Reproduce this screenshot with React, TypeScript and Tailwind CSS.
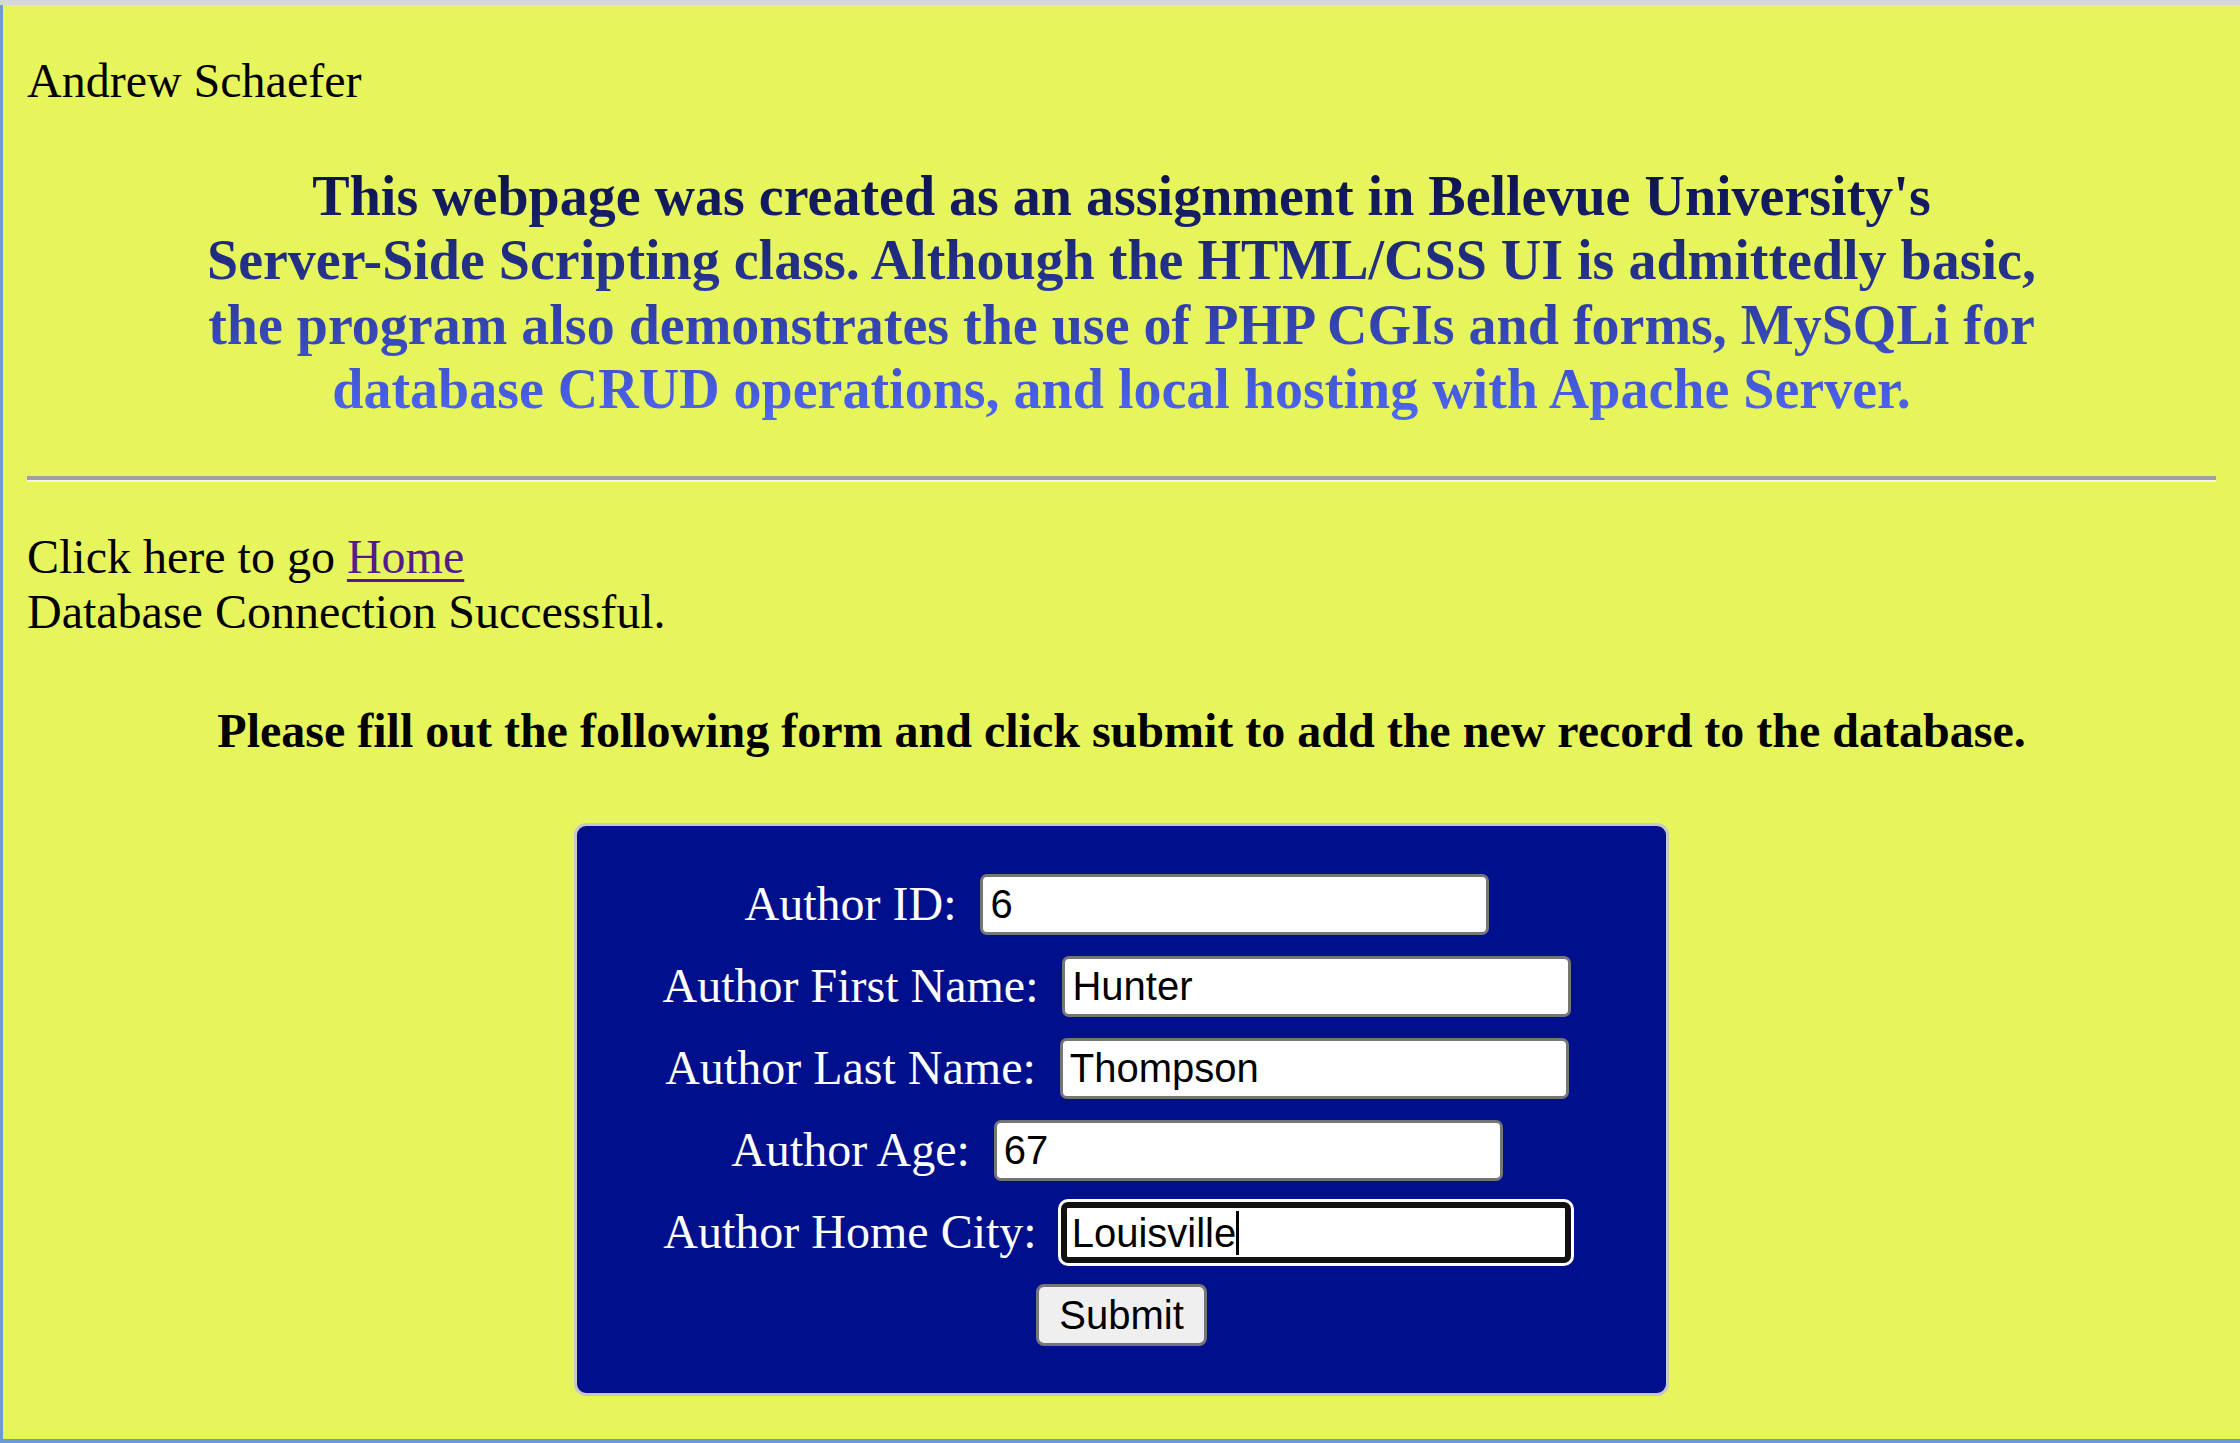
import React from "react";

const serif = { fontFamily: '"Liberation Serif", "Times New Roman", serif' };

function Field({ label, value }: { label: string; value: string }) {
  return (
    <div className="flex h-[61px] items-center justify-center gap-[24px] pr-[9px]">
      <span className="-mt-[2px] text-[48px] leading-none text-white" style={serif}>
        {label}
      </span>
      <input
        readOnly
        defaultValue={value}
        className="h-[61px] w-[509px] rounded-[7px] border-[3px] border-[#767676] bg-white px-[7px] text-[40px] text-black outline-none font-['Liberation_Sans',Arial,sans-serif]"
      />
    </div>
  );
}

export default function App() {
  return (
    <div className="flex h-[1443px] w-full flex-col overflow-hidden bg-[#e7f55c]">
      <div className="h-[5px] w-full shrink-0 bg-[#d5d7dc]" />
      <div
        className="flex flex-1 flex-col border-b-[4px] border-l-[3px] border-[#6a9bd8] pl-[24px] pr-[24px] pt-[48px] text-black"
        style={serif}
      >
        <p className="text-[48px] leading-[55px]">Andrew Schaefer</p>

        <h3 className="mt-[56px] bg-gradient-to-b from-[#0a0f45] to-[#5068f5] bg-clip-text text-center text-[56px] font-bold leading-[64.3px] text-transparent">
          This webpage was created as an assignment in Bellevue University's
          <br />
          Server-Side Scripting class. Although the HTML/CSS UI is admittedly basic,
          <br />
          the program also demonstrates the use of PHP CGIs and forms, MySQLi for
          <br />
          database CRUD operations, and local hosting with Apache Server.
        </h3>

        <div className="mt-[55px] h-[6px] w-full border-b-[2px] border-t-[4px] border-b-[#f2f2f2] border-t-[#a0a0a0]" />

        <p className="mt-[47px] text-[48px] leading-[55px]">
          Click here to go{" "}
          <a href="#" className="text-[#551a8b] underline decoration-[3px] underline-offset-[6px]">
            Home
          </a>
          <br />
          Database Connection Successful.
        </p>

        <h4 className="mt-[64px] text-center text-[48px] font-bold leading-[55px]">
          Please fill out the following form and click submit to add the new record to the database.
        </h4>

        <div className="mx-auto mt-[65px] flex w-[1095px] flex-col gap-[21px] rounded-[12px] border-[3px] border-[#c8c8c8] bg-[#00108c] pb-[47px] pt-[48px]">
          <Field label="Author ID:" value="6" />
          <Field label="Author First Name:" value="Hunter" />
          <Field label="Author Last Name:" value="Thompson" />
          <Field label="Author Age:" value="67" />
          <div className="flex h-[61px] items-center justify-center gap-[24px] pr-[9px]">
            <span className="-mt-[2px] text-[48px] leading-none text-white" style={serif}>
              Author Home City:
            </span>
            <div className="flex h-[61px] w-[510px] items-center rounded-[7px] border-[6px] border-[#111111] bg-white px-[5px] shadow-[0_0_0_3px_#ffffff] font-['Liberation_Sans',Arial,sans-serif]">
              <span className="text-[40px] leading-none text-black">Louisville</span>
              <span className="h-[44px] w-[3px] bg-black" />
            </div>
          </div>
          <div className="flex justify-center">
            <button className="flex h-[62px] w-[171px] items-center justify-center rounded-[8px] border-[3px] border-[#767676] bg-[#efefef] text-[40px] text-black font-['Liberation_Sans',Arial,sans-serif]">
              Submit
            </button>
          </div>
        </div>
      </div>
    </div>
  );
}
